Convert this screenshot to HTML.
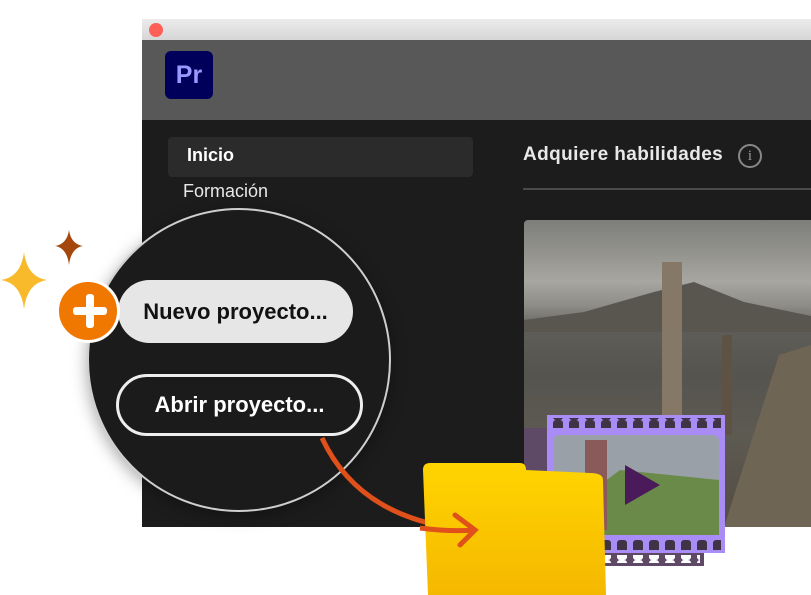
<!DOCTYPE html>
<html><head><style>
body{margin:0;width:811px;height:595px;background:#fff;position:relative;overflow:hidden;font-family:"Liberation Sans",sans-serif}
.a{position:absolute}
</style></head><body>
<div class="a" style="left:142px;top:19px;width:669px;height:21px;background:linear-gradient(#ececec,#d6d6d6)"></div>
<div class="a" style="left:149px;top:23px;width:14px;height:14px;border-radius:50%;background:#fe5f57"></div>
<div class="a" style="left:142px;top:40px;width:669px;height:80px;background:#585858"></div>
<div class="a" style="left:165px;top:51px;width:48px;height:48px;border-radius:6px;background:#00005b;color:#9999ff;font-weight:bold;font-size:25px;line-height:48px;text-align:center">Pr</div>
<div class="a" style="left:142px;top:120px;width:669px;height:407px;background:#1c1c1c"></div>
<div class="a" style="left:168px;top:137px;width:305px;height:40px;border-radius:4px;background:#2b2b2b"></div>
<div class="a" style="left:187px;top:145px;color:#fff;font-weight:bold;font-size:18px">Inicio</div>
<div class="a" style="left:183px;top:181px;color:#e8e8e8;font-size:18px">Formación</div>
<div class="a" style="left:523px;top:144px;color:#e8e8e8;font-weight:bold;font-size:19px;letter-spacing:0.4px">Adquiere habilidades</div>
<div class="a" style="left:738px;top:144px;width:20px;height:20px;border:2px solid #888;border-radius:50%;color:#999;font-family:'Liberation Serif',serif;font-size:15px;text-align:center;line-height:20px">i</div>
<div class="a" style="left:523px;top:188px;width:288px;height:2px;background:#4a4a4a"></div>
<div class="a" style="left:524px;top:220px;width:287px;height:307px;border-radius:4px 0 0 0;background:linear-gradient(#7d7d7a 0%,#a7a6a0 20%,#8d8c86 28%,#5f5d58 36%,#56544f 50%,#5d5a52 70%,#544d43 100%)"></div>
<svg class="a" style="left:524px;top:220px" width="287" height="307">
<path d="M0 100 L60 92 L130 72 L170 62 L220 82 L287 96 L287 112 L0 112Z" fill="#58564f"/>
<rect x="138" y="42" width="20" height="170" fill="#857866"/>
<rect x="198" y="115" width="10" height="100" fill="#5d5244"/>
<path d="M200 307 L255 135 L287 125 L287 307Z" fill="#6f6555"/>
</svg>
<div class="a" style="left:87px;top:208px;width:300px;height:300px;border-radius:50%;background:#1b1b1b;border:2px solid #cfcfcf;box-shadow:0 4px 16px rgba(0,0,0,.35)"></div>
<div class="a" style="left:118px;top:280px;width:235px;height:63px;border-radius:32px;background:#e6e6e6;color:#111;font-weight:bold;font-size:22px;line-height:63px;text-align:center;padding-left:0px;box-sizing:border-box">Nuevo proyecto...</div>
<div class="a" style="left:116px;top:374px;width:247px;height:62px;border-radius:31px;border:3px solid #eee;box-sizing:border-box;color:#fff;font-weight:bold;font-size:22px;line-height:56px;text-align:center">Abrir proyecto...</div>
<div class="a" style="left:56px;top:279px;width:64px;height:64px;border-radius:50%;background:#f07800;border:3px solid #fff;box-sizing:border-box"></div>
<div class="a" style="left:73px;top:307px;width:34px;height:8px;border-radius:3px;background:#fff"></div>
<div class="a" style="left:86px;top:294px;width:8px;height:34px;border-radius:3px;background:#fff"></div>
<svg class="a" style="left:0;top:225px" width="100" height="90">
<path d="M24 27 Q27 52 47 55 Q27 58 24 84 Q21 58 1 55 Q21 52 24 27Z" fill="#f8b92b"/>
<path d="M69 5 Q71 19 83 21 Q71 23 69 40 Q67 23 55 21 Q67 19 69 5Z" fill="#a4470c"/>
</svg>
<svg class="a" style="left:0;top:0" width="811" height="595">
<path d="M322 438 Q360 520 470 530" stroke="#e0501a" stroke-width="5" fill="none"/>
<defs><linearGradient id="g" x1="0" y1="0" x2="0" y2="1"><stop offset="0" stop-color="#ffd400"/><stop offset="1" stop-color="#f5b800"/></linearGradient>
<pattern id="h" x="550" y="0" width="16" height="20" patternUnits="userSpaceOnUse"><rect x="3" y="0" width="10" height="20" rx="3" fill="#3e3446"/></pattern>
<pattern id="h2" x="550" y="0" width="16" height="20" patternUnits="userSpaceOnUse"><rect x="3" y="0" width="10" height="20" rx="3" fill="#fff"/></pattern></defs>
<rect x="524" y="428" width="180" height="138" fill="#5e4a66"/>
<rect x="530" y="555" width="170" height="8" fill="url(#h2)"/>
<rect x="547" y="415" width="178" height="138" fill="#a98cf5"/>
<rect x="553" y="418" width="168" height="10" fill="url(#h)"/>
<rect x="553" y="540" width="168" height="10" fill="url(#h)"/>
<rect x="553" y="435" width="166" height="100" rx="6" fill="#9aa0a8"/>
<path d="M553 520 L620 470 L719 480 L719 535 L553 535Z" fill="#6a8a4a"/>
<rect x="585" y="440" width="22" height="90" fill="#8a5a5a"/>
<path d="M625 465 L660 485 L625 505Z" fill="#4a1a5a"/>
<path d="M423 470 Q423 463 430 463 L520 463 Q526 463 526 470 L590 473 Q603 473 603 480 L606 595 L428 595Z" fill="url(#g)"/>
<path d="M420 528 Q450 532 475 530" stroke="#e0501a" stroke-width="5" fill="none"/>
<path d="M455 515 L475 530 L460 545" stroke="#e0501a" stroke-width="5" fill="none" stroke-linecap="round"/>
</svg>
</body></html>
